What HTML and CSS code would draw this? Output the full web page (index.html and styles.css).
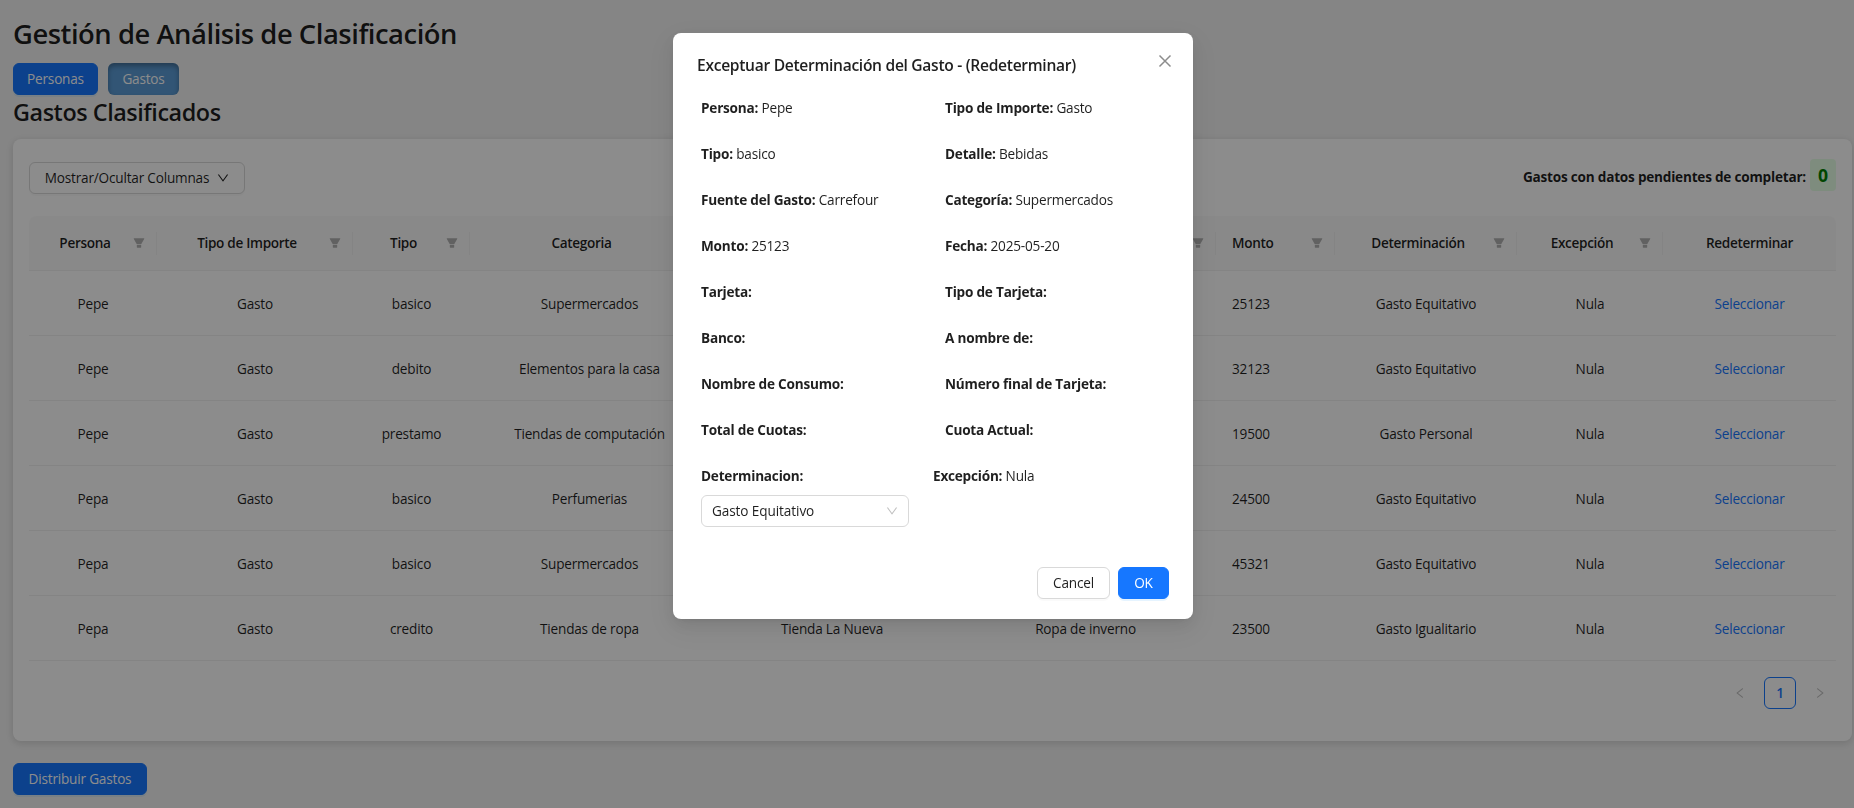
FILE: index.html
```
<!DOCTYPE html>
<html lang="es">
<head>
<meta charset="utf-8">
<title>Gestión de Análisis de Clasificación</title>
<link rel="stylesheet" href="styles.css">
</head>
<body>
<svg class="defs" width="0" height="0" aria-hidden="true">
  <symbol id="filter" viewBox="64 64 896 896"><path d="M349 838c0 17.700 14.200 32 31.800 32h262.400c17.600 0 31.800-14.300 31.800-32V642H349v196zm531.100-684H143.900c-24.500 0-39.800 26.700-27.500 48l221.300 376h348.800l221.300-376c12.100-21.300-3.200-48-27.700-48z"/></symbol>
  <symbol id="down" viewBox="64 64 896 896"><path d="M884 256h-75c-5.100 0-9.900 2.500-12.900 6.600L512 654.200 227.900 262.600c-3-4.100-7.800-6.600-12.900-6.600h-75c-6.500 0-10.300 7.400-6.500 12.700l352.600 486.100c12.800 17.600 39 17.600 51.700 0l352.600-486.100c3.900-5.300.1-12.700-6.400-12.700z"/></symbol>
  <symbol id="left" viewBox="64 64 896 896"><path d="M724 218.300V141c0-6.700-7.700-10.400-12.900-6.300L260.300 486.800a31.860 31.860 0 000 50.300l450.800 352.100c5.300 4.100 12.900.4 12.900-6.300v-77.300c0-4.900-2.300-9.600-6.100-12.600l-360-281 360-281.100c3.800-3 6.100-7.700 6.100-12.600z"/></symbol>
  <symbol id="right" viewBox="64 64 896 896"><path d="M765.700 486.800L314.900 134.700A7.970 7.970 0 00302 141v77.300c0 4.900 2.300 9.600 6.100 12.600l360 281.100-360 281.100c-3.900 3-6.100 7.700-6.100 12.600V883c0 6.700 7.700 10.400 12.900 6.300l450.800-352.100a31.960 31.960 0 000-50.400z"/></symbol>
  <symbol id="close" viewBox="0 0 16 16"><path d="M1.700 1.700l12.600 12.600M14.300 1.700L1.700 14.300" fill="none" stroke="currentColor" stroke-width="1.700"/></symbol>
</svg>
<main class="page">
  <h1 class="title">Gestión de Análisis de Clasificación</h1>
  <nav class="tabs">
    <button class="btn primary tab-personas">Personas</button>
    <button class="btn primary tab-gastos">Gastos</button>
  </nav>
  <h2 class="subtitle">Gastos Clasificados</h2>
  <section class="card">
    <div class="toolbar">
      <button class="btn columns-btn"><span>Mostrar/Ocultar Columnas</span><svg class="icon"><use href="#down"/></svg></button>
      <p class="pending"><span class="pending-label">Gastos con datos pendientes de completar:</span><span class="count">0</span></p>
    </div>
    <table class="table">
      <colgroup><col class="c1"><col class="c2"><col class="c3"><col class="c4"><col class="c5"><col class="c6"><col class="c7"><col class="c8"><col class="c9"><col class="c10"></colgroup>
      <thead><tr>
        <th><div class="head"><span>Persona</span><svg class="filter"><use href="#filter"/></svg></div></th>
        <th><div class="head"><span>Tipo de Importe</span><svg class="filter"><use href="#filter"/></svg></div></th>
        <th><div class="head"><span>Tipo</span><svg class="filter"><use href="#filter"/></svg></div></th>
        <th><div class="head"><span>Categoria</span><svg class="filter"><use href="#filter"/></svg></div></th>
        <th><div class="head"><span></span><svg class="filter"><use href="#filter"/></svg></div></th>
        <th><div class="head"><span></span><svg class="filter"><use href="#filter"/></svg></div></th>
        <th class="start"><div class="head"><span>Monto</span><svg class="filter"><use href="#filter"/></svg></div></th>
        <th><div class="head"><span>Determinación</span><svg class="filter"><use href="#filter"/></svg></div></th>
        <th><div class="head"><span>Excepción</span><svg class="filter"><use href="#filter"/></svg></div></th>
        <th>Redeterminar</th>
      </tr></thead>
      <tbody>
        <tr><td>Pepe</td><td>Gasto</td><td>basico</td><td>Supermercados</td><td></td><td></td><td class="start">25123</td><td>Gasto Equitativo</td><td>Nula</td><td><a>Seleccionar</a></td></tr>
        <tr><td>Pepe</td><td>Gasto</td><td>debito</td><td>Elementos para la casa</td><td></td><td></td><td class="start">32123</td><td>Gasto Equitativo</td><td>Nula</td><td><a>Seleccionar</a></td></tr>
        <tr><td>Pepe</td><td>Gasto</td><td>prestamo</td><td>Tiendas de computación</td><td></td><td></td><td class="start">19500</td><td>Gasto Personal</td><td>Nula</td><td><a>Seleccionar</a></td></tr>
        <tr><td>Pepa</td><td>Gasto</td><td>basico</td><td>Perfumerias</td><td></td><td></td><td class="start">24500</td><td>Gasto Equitativo</td><td>Nula</td><td><a>Seleccionar</a></td></tr>
        <tr><td>Pepa</td><td>Gasto</td><td>basico</td><td>Supermercados</td><td></td><td></td><td class="start">45321</td><td>Gasto Equitativo</td><td>Nula</td><td><a>Seleccionar</a></td></tr>
        <tr><td>Pepa</td><td>Gasto</td><td>credito</td><td>Tiendas de ropa</td><td>Tienda La Nueva</td><td>Ropa de inverno</td><td class="start">23500</td><td>Gasto Igualitario</td><td>Nula</td><td><a>Seleccionar</a></td></tr>
      </tbody>
    </table>
    <div class="pagination">
      <span class="page-item arrow"><svg class="icon"><use href="#left"/></svg></span>
      <span class="page-item current">1</span>
      <span class="page-item arrow"><svg class="icon"><use href="#right"/></svg></span>
    </div>
  </section>
  <button class="btn primary distribute">Distribuir Gastos</button>
</main>
<div class="mask">
  <div class="modal" role="dialog">
    <svg class="close"><use href="#close"/></svg>
    <h3 class="modal-title">Exceptuar Determinación del Gasto - (Redeterminar)</h3>
    <div class="fields">
      <p><b>Persona:</b> Pepe</p><p><b>Tipo de Importe:</b> Gasto</p>
      <p><b>Tipo:</b> basico</p><p><b>Detalle:</b> Bebidas</p>
      <p><b>Fuente del Gasto:</b> Carrefour</p><p><b>Categoría:</b> Supermercados</p>
      <p><b>Monto:</b> 25123</p><p><b>Fecha:</b> 2025-05-20</p>
      <p><b>Tarjeta:</b></p><p><b>Tipo de Tarjeta:</b></p>
      <p><b>Banco:</b></p><p><b>A nombre de:</b></p>
      <p><b>Nombre de Consumo:</b></p><p><b>Número final de Tarjeta:</b></p>
      <p><b>Total de Cuotas:</b></p><p><b>Cuota Actual:</b></p>
    </div>
    <div class="decision">
      <div><p><b>Determinacion:</b></p><div class="select"><span>Gasto Equitativo</span><svg class="icon"><use href="#down"/></svg></div></div>
      <p><b>Excepción:</b> Nula</p>
    </div>
    <div class="footer"><button class="btn cancel">Cancel</button><button class="btn primary ok">OK</button></div>
  </div>
</div>
</body>
</html>
```
FILE: styles.css
```
* { box-sizing: border-box; }
body {
  margin: 0;
  height: 808px;
  overflow: hidden;
  background: #f3f3f3;
  color: rgba(0, 0, 0, 0.88);
  font: 13.6px/22px "Segoe UI", "Open Sans", "Noto Sans", sans-serif;
  letter-spacing: -0.2px;
}
h1, h2, h3, p { margin: 0; }
svg { fill: currentColor; }
.defs { position: absolute; }
.page { padding: 14px 2px 0 13px; }
.title { font-size: 27.4px; line-height: 40px; font-weight: 600; letter-spacing: -0.47px; }
.tabs { display: flex; gap: 10px; margin-top: 9px; }
.subtitle { font-size: 23.4px; line-height: 32px; font-weight: 600; letter-spacing: -0.45px; margin-top: 1px; }
.btn {
  height: 32px;
  padding: 0;
  display: flex;
  align-items: center;
  justify-content: center;
  border: 1px solid #d9d9d9;
  border-radius: 6px;
  background: #fff;
  color: rgba(0, 0, 0, 0.88);
  font: inherit;
  letter-spacing: inherit;
  box-shadow: 0 2px 0 rgba(0, 0, 0, 0.02);
}
.primary { border-color: #1677ff; background: #1677ff; color: #fff; box-shadow: 0 2px 0 rgba(5, 145, 255, 0.1); }
.tab-personas { width: 85px; }
.tab-gastos { width: 71px; border: 0; background: #5b9bd5; box-shadow: inset 0 3px 5px rgba(0, 0, 0, 0.3); }
.card {
  margin-top: 11px;
  height: 602px;
  padding: 16px;
  border-radius: 8px;
  background: #fff;
  box-shadow: 0 2px 8px rgba(0, 0, 0, 0.15);
}
.toolbar { display: flex; justify-content: space-between; height: 61px; padding-top: 7px; }
.columns-btn { width: 216px; gap: 8px; }
.icon { width: 12px; height: 12px; }
.pending { display: flex; align-items: center; gap: 4px; height: 32px; margin-top: -3px; }
.pending-label { font-weight: 700; padding-top: 4px; }
.count {
  width: 26px;
  height: 32px;
  border-radius: 4px;
  background: #e6ffe6;
  color: #008000;
  text-align: center;
  font-size: 17.6px;
  line-height: 32px;
  font-weight: 700;
}
.table { width: 1807px; table-layout: fixed; border-collapse: separate; border-spacing: 0; }
.c1 { width: 128px; }
.c2 { width: 196px; }
.c3 { width: 117px; }
.c4 { width: 239px; }
.c5 { width: 246px; }
.c6 { width: 261px; }
.c7 { width: 119px; }
.c8 { width: 182px; }
.c9 { width: 146px; }
.c10 { width: 173px; }
th, td { padding: 0 16px; text-align: center; border-bottom: 1px solid #f0f0f0; }
th {
  height: 55px;
  font-weight: 600;
  letter-spacing: -0.32px;
  background: linear-gradient(#f0f0f0, #f0f0f0) right center / 1px 23px no-repeat #fafafa;
}
th:first-child { border-top-left-radius: 8px; }
th:last-child { background: #fafafa; border-top-right-radius: 8px; }
td { height: 65px; padding-top: 1px; }
.start { text-align: left; }
.head { display: flex; align-items: center; }
.head span { flex: 1; }
.filter { width: 12px; height: 12px; margin: 0 -4px 0 8px; color: rgba(0, 0, 0, 0.29); }
a { color: #1677ff; }
.pagination { display: flex; justify-content: flex-end; gap: 8px; margin-top: 16px; }
.page-item { width: 32px; height: 32px; display: flex; align-items: center; justify-content: center; border-radius: 6px; }
.current { border: 1px solid #1677ff; color: #1677ff; font-weight: 600; }
.arrow { color: rgba(0, 0, 0, 0.25); }
.distribute { width: 134px; margin-top: 22px; }
.mask { position: fixed; inset: 0; padding: 33px 0 0 12px; background: rgba(0, 0, 0, 0.45); }
.modal {
  position: relative;
  width: 520px;
  height: 586px;
  margin: 0 auto;
  padding: 20px 24px;
  border-radius: 8px;
  background: #fff;
  box-shadow: 0 6px 16px rgba(0, 0, 0, 0.08), 0 3px 6px -4px rgba(0, 0, 0, 0.12), 0 9px 28px 8px rgba(0, 0, 0, 0.05);
}
.close { position: absolute; top: 21px; right: 21px; width: 14px; height: 14px; color: rgba(0, 0, 0, 0.45); }
.modal-title { font-size: 15.6px; line-height: 24px; font-weight: 600; letter-spacing: -0.3px; }
.fields { display: grid; grid-template-columns: 244px 1fr; row-gap: 24px; padding: 20px 4px 24px; }
.fields p { height: 22px; }
b, .pending-label { letter-spacing: -0.22px; }
.decision { display: grid; grid-template-columns: 232px 1fr; padding-left: 4px; }
.select {
  display: flex;
  align-items: center;
  justify-content: space-between;
  width: 208px;
  height: 32px;
  margin-top: 8px;
  padding: 0 10px;
  border: 1px solid #d9d9d9;
  border-radius: 6px;
  letter-spacing: -0.1px;
}
.select .icon { color: rgba(0, 0, 0, 0.25); }
.footer { display: flex; justify-content: flex-end; gap: 8px; margin-top: 40px; }
.cancel { width: 73px; }
.ok { width: 51px; }
```
